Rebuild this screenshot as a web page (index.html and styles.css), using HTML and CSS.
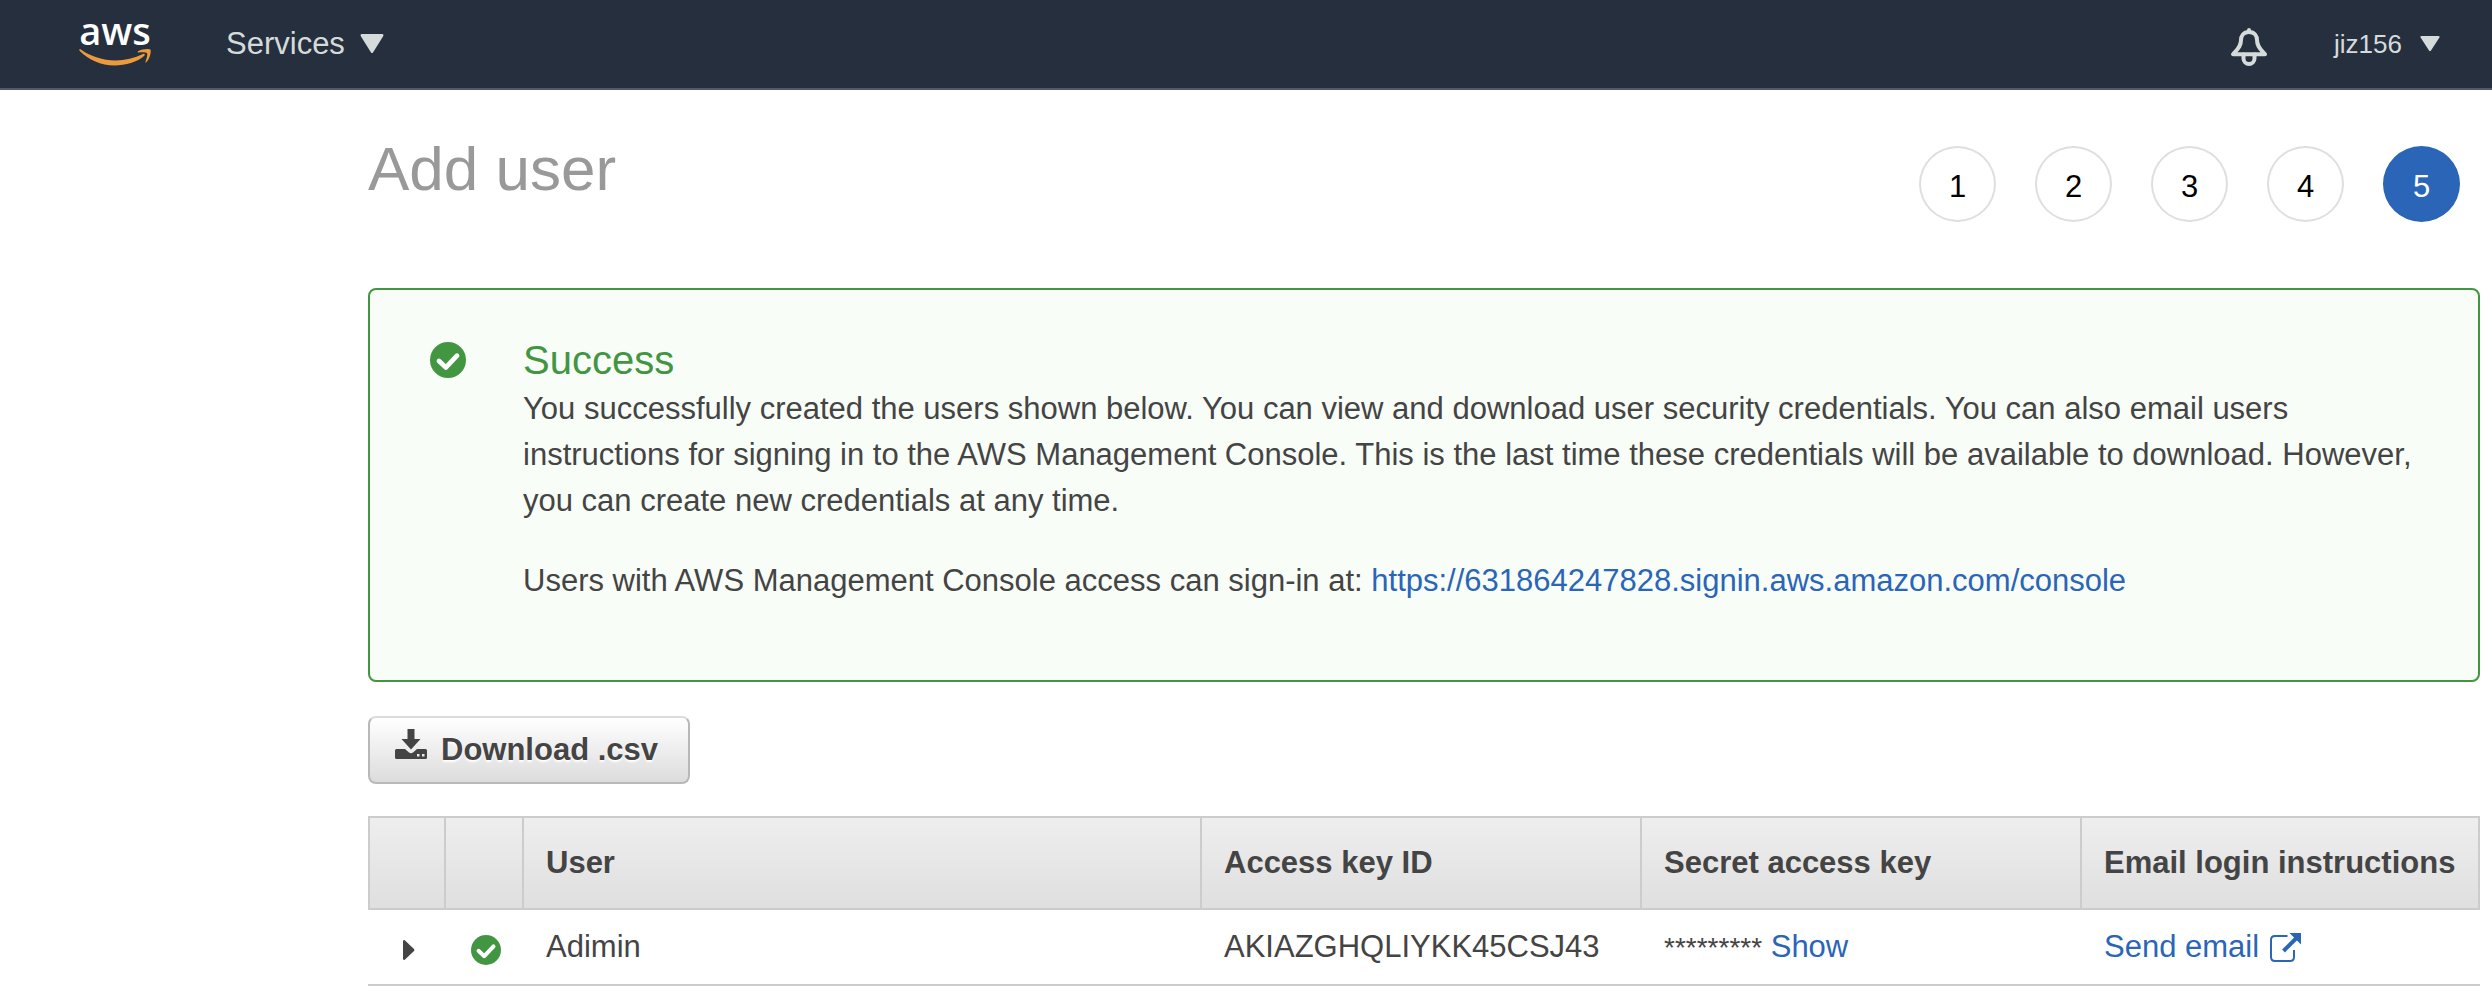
FILE: index.html
```html
<!DOCTYPE html>
<html lang="en">
<head>
<meta charset="utf-8">
<title>Add user</title>
<meta name="viewport" content="width=device-width, initial-scale=1">
<link rel="stylesheet" href="styles.css">
</head>
<body>
<header class="topbar">
  <a class="logo" href="#" aria-label="AWS home">
    <svg width="72" height="82" viewBox="0 -17 72 82" aria-hidden="true">
      <text class="logo-word" x="36" y="25" text-anchor="middle">aws</text>
      <path class="logo-smile" d="M0.6 29.2C.2 29.9.3 30.5 1 31.200C9.500 39.500 22 45.500 35.500 45.500C46.500 45.500 58.500 42 65.300 35.800C66.600 34.600 65.500 33.200 64 34C55.500 38.200 46 40.400 36.500 40.400C23.800 40.400 11.800 36.400 2.200 29.700C1.500 29.200 1 28.900 .6 29.200Z"/>
      <path class="logo-smile" d="M59 31.300C63 28.800 70.700 28.400 71.500 29.800C72.300 31.400 71 38.700 67.300 42.300C66.700 42.900 66.200 42.600 66.400 41.900C67.300 39.500 68.900 34.500 68 33.200C67.100 32 62.100 32.200 59.500 32.500C58.700 32.600 58.400 31.800 59 31.300Z"/>
    </svg>
  </a>
  <button class="menu menu-services" type="button">Services
    <svg width="24" height="20" viewBox="0 0 24 20" aria-hidden="true"><path d="M1.500 0H22.500Q24 .5 23.300 2L13 18.500Q12 19.600 11 18.500L.7 2Q0 .5 1.500 0Z"/></svg>
  </button>
  <button class="bell" type="button" aria-label="Notifications">
    <svg width="38" height="38" viewBox="0 0 38 38" aria-hidden="true">
      <path d="M19 4C13 4 11 8.500 11 12C11 19 7 21.500 3 26.300H35C31 21.500 27 19 27 12C27 8.500 25 4 19 4Z"/>
      <path d="M19 2V4M13.500 26.500V30.500A5.500 5.500 0 0 0 24.500 30.500V26.500"/>
    </svg>
  </button>
  <button class="menu menu-account" type="button">jiz156
    <svg width="20" height="16" viewBox="0 0 24 20" preserveAspectRatio="none" aria-hidden="true"><path d="M1.500 0H22.500Q24 .5 23.300 2L13 18.500Q12 19.600 11 18.500L.7 2Q0 .5 1.500 0Z"/></svg>
  </button>
</header>
<main class="content">
  <div class="page-head">
    <h1 class="title">Add user</h1>
    <ol class="steps">
      <li class="step">1</li>
      <li class="step">2</li>
      <li class="step">3</li>
      <li class="step">4</li>
      <li class="step step-current" aria-current="step">5</li>
    </ol>
  </div>
  <section class="alert">
    <svg class="alert-icon" width="36" height="36" viewBox="0 0 30 30" aria-hidden="true"><circle class="ok-disc" cx="15" cy="15" r="15"/><path class="ok-tick" d="M7.500 15.800L13.300 21.200L22.500 11.400"/></svg>
    <div class="alert-body">
      <h2 class="alert-title">Success</h2>
      <p class="alert-text">You successfully created the users shown below. You can view and download user security credentials. You can also email users instructions for signing in to the AWS Management Console. This is the last time these credentials will be available to download. However, you can create new credentials at any time.</p>
      <p class="alert-text">Users with AWS Management Console access can sign-in at: <a href="#">https://631864247828.signin.aws.amazon.com/console</a></p>
    </div>
  </section>
  <button class="download" type="button">
    <svg width="32" height="32" viewBox="0 0 32 32" aria-hidden="true"><path fill-rule="evenodd" d="M12.500 1H19.500V11H25.500L16 21.500L6.500 11H12.500ZM1.500 21H10L14 24.500Q16 26 18 24.500L22 21H30.500Q32 21 32 22.500V29.500Q32 31 30.500 31H1.500Q0 31 0 29.500V22.500Q0 21 1.500 21ZM22 26V28.500H24.500V26ZM27 26V28.500H29.500V26Z"/></svg>
    Download .csv
  </button>
  <table class="users">
    <colgroup><col class="col-toggle"><col class="col-status"><col><col class="col-key"><col class="col-key"><col class="col-email"></colgroup>
    <thead>
      <tr><th></th><th></th><th scope="col">User</th><th scope="col">Access key ID</th><th scope="col">Secret access key</th><th scope="col">Email login instructions</th></tr>
    </thead>
    <tbody>
      <tr>
        <td class="icon-cell"><button class="toggle" type="button" aria-label="Show details"><svg width="12" height="20" viewBox="0 0 12 20" aria-hidden="true"><path d="M0 1Q0 0 1.500 0L11 9Q12 10 11 11L1.500 20Q0 20 0 19Z"/></svg></button></td>
        <td class="icon-cell"><svg width="30" height="30" viewBox="0 0 30 30" role="img" aria-label="Created"><circle class="ok-disc" cx="15" cy="15" r="15"/><path class="ok-tick" d="M7.500 15.800L13.300 21.200L22.500 11.400"/></svg></td>
        <td>Adimin</td>
        <td>AKIAZGHQLIYKK45CSJ43</td>
        <td><span class="mask">*********</span> <a href="#">Show</a></td>
        <td><a class="send" href="#">Send email
          <svg width="32" height="32" viewBox="0 0 32 32" aria-hidden="true"><path class="ext-box" d="M17.500 5H5Q1 5 1 9V26Q1 30 5 30H20Q24 30 24 26V19"/><path class="ext-shaft" d="M13.500 20L27 6.500"/><path class="ext-head" d="M19.500 2H31V13.500Z"/></svg></a></td>
      </tr>
    </tbody>
  </table>
</main>
</body>
</html>
```
FILE: styles.css
```css
* { box-sizing: border-box; }

body {
  margin: 0;
  background: #fff;
  color: #444;
  font-family: "Liberation Sans", Arial, sans-serif;
  font-size: 31px;
  line-height: 46px;
}

h1, h2, p, ol { margin: 0; padding: 0; font-weight: normal; }
button { margin: 0; padding: 0; border: 0; background: none; color: inherit; font: inherit; }
svg { display: block; flex: none; }
a { color: #2a65b7; text-decoration: none; }

.topbar {
  display: flex;
  align-items: center;
  height: 90px;
  padding: 0 52px 0 79px;
  background: #262f3e;
  border-bottom: 2px solid #545b68;
  color: #d5dbdb;
}
.topbar svg { fill: currentColor; }
.topbar .logo-word { font-family: "Open Sans", "Noto Sans", sans-serif; font-size: 38px; font-weight: 600; fill: #fff; }
.topbar .logo-smile { fill: #ec9b3c; }
.menu { display: flex; align-items: center; }
.menu-services { margin-left: 75px; gap: 15px; }
.menu-account { margin-left: 66px; gap: 18px; font-size: 26px; }
.bell { margin-left: auto; padding-top: 6px; }
.topbar .bell svg { fill: none; stroke: currentColor; stroke-width: 4; stroke-linejoin: round; stroke-linecap: round; }

.content { padding: 48px 12px 0 368px; }
.page-head { display: flex; justify-content: space-between; padding-right: 20px; }
.title { color: #999; font-size: 62px; line-height: 62px; }
.steps { display: flex; gap: 39px; margin-top: 8px; list-style: none; }
.step {
  display: flex;
  align-items: center;
  justify-content: center;
  width: 77px;
  height: 76px;
  padding-top: 6px;
  border: 2px solid #dfdfdf;
  border-radius: 50%;
  color: #000;
}
.step-current { background: #2a65b7; border-color: #2a65b7; color: #fff; }

.alert {
  display: flex;
  gap: 57px;
  margin-top: 66px;
  padding: 46px 56px 76px 60px;
  border: 2px solid #429641;
  border-radius: 8px;
  background: #f8fdf8;
}
.alert-icon { margin-top: 6px; }
.alert-title { margin-bottom: 2px; color: #429641; font-size: 40px; line-height: 48px; }
.alert-text + .alert-text { margin-top: 34px; }
.ok-disc { fill: #429641; }
.ok-tick { fill: none; stroke: #fff; stroke-width: 4; stroke-linecap: round; stroke-linejoin: round; }

.download {
  display: flex;
  align-items: center;
  gap: 14px;
  height: 68px;
  margin: 34px 0 32px;
  padding: 0 30px 0 25px;
  border: 2px solid #b8b8b8;
  border-top-color: #dcdcdc;
  border-radius: 8px;
  background: linear-gradient(#fff, #dcdcdc);
  font-weight: bold;
  text-shadow: 0 2px 2px #fff;
}
.download svg { margin-bottom: 12px; fill: #444; }

.users { width: 100%; table-layout: fixed; border-collapse: separate; border-spacing: 0; }
.col-toggle { width: 76px; }
.col-status { width: 78px; }
.col-key { width: 440px; }
.col-email { width: 400px; }
.users th {
  height: 94px;
  padding: 0 22px;
  border: 2px solid #ccc;
  border-right-width: 0;
  background: linear-gradient(#eee, #dfdfdf);
  text-align: left;
  white-space: nowrap;
}
.users th:last-child { border-right-width: 2px; }
.users td { height: 76px; padding: 0 22px 0 24px; border-bottom: 2px solid #ccc; white-space: nowrap; }
.users .icon-cell { padding: 6px 0 0 6px; }
.icon-cell svg { margin: 0 auto; fill: #444; }
.toggle { display: block; margin: 0 auto; }
.mask { font-size: 28px; }
.send { display: flex; align-items: center; gap: 11px; }
.ext-box { fill: none; stroke: #2a65b7; stroke-width: 2; }
.ext-shaft { stroke: #2a65b7; stroke-width: 4; }
.ext-head { fill: #2a65b7; }
```
